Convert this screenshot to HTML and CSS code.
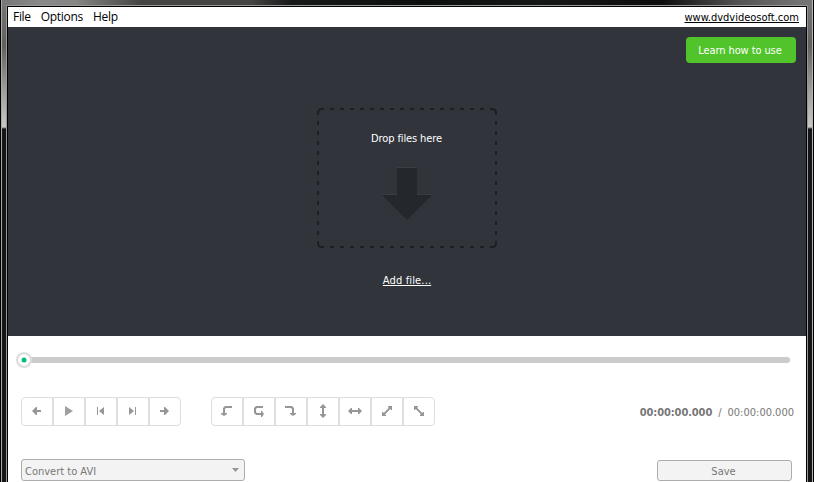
FILE: index.html
```html
<!DOCTYPE html>
<html lang="en">
<head>
<meta charset="utf-8">
<title>Video editor</title>
<link rel="stylesheet" href="styles.css">
</head>
<body>
<div class="frame">
<div class="glass">
<main class="window">
  <header class="menubar">
    <nav class="menu"><span>File</span><span>Options</span><span>Help</span></nav>
    <a class="site">www.dvdvideosoft.com</a>
  </header>
  <section class="stage">
    <button class="learn"><span>Learn how to use</span></button>
    <div class="drop">
      <svg class="dash" width="180" height="140" viewBox="0 0 180 140">
        <path class="hint" d="M13 0.500H167M13 138.500H167"/>
        <path class="dashes" d="M13 1H167M13 139H167M1 13V127M179 13V127"/>
        <path class="corner" d="M1 7V5Q1 1 5 1H7M173 1H175Q179 1 179 5V7M179 133V135Q179 139 175 139H173M7 139H5Q1 139 1 135V133"/>
      </svg>
      <span class="droptext">Drop files here</span>
      <svg class="arrow" width="50" height="54" viewBox="0 0 50 54"><path fill="#3b3d43" d="M15 0H35V27H50L49 29H1L0 27H15Z"/><path fill="#24272b" d="M15 1H35V28H50L25 53L0 28H15Z"/></svg>
    </div>
    <a class="add">Add file...</a>
  </section>
  <section class="controls">
    <div class="slider"><svg class="knob" width="16" height="16" viewBox="0 0 16 16"><circle cx="8" cy="8" r="6.900" fill="#fff" stroke="#dedede" stroke-width="2.200"/><circle cx="8" cy="8" r="2.500" fill="#00bd7c"/></svg></div>
    <div class="tools">
      <div class="group">
        <button><svg viewBox="0 0 16 16"><path d="M3 8L7 4H8V7H12V9H8V12H7Z"/></svg></button>
        <button><svg viewBox="0 0 16 16"><path fill="#a0a0a0" d="M4 3L12 8L4 13Z"/></svg></button>
        <button><svg viewBox="0 0 16 16"><path d="M4 4H5V12H4ZM11 4V12L6 8Z"/></svg></button>
        <button><svg viewBox="0 0 16 16"><path d="M4 4L9 8L4 12ZM10 4H11V12H10Z"/></svg></button>
        <button><svg viewBox="0 0 16 16"><path d="M3 7H7V4H8L12 8L8 12H7V9H3Z"/></svg></button>
      </div>
      <div class="group">
        <button><svg viewBox="0 0 16 16"><path d="M13 3V5H7L6 6V10H8V11L5 13L2 11V10H4V5L6 3Z"/></svg></button>
        <button><svg viewBox="0 0 16 16"><path d="M12 3V5H6L5 6V9L6 10H10V8H11L13 11L11 14H10V12H5L3 10V5L5 3Z"/></svg></button>
        <button><svg viewBox="0 0 16 16"><path d="M2 3H9L11 5V10H13V11L10 13L7 11V10H9V6L8 5H2Z"/></svg></button>
        <button><svg viewBox="0 0 16 16"><path d="M8 1L11 4V5H9V11H11V12L8 15L5 12V11H7V5H5V4Z"/></svg></button>
        <button><svg viewBox="0 0 16 16"><path d="M1 8L4 5H5V7H11V5H12L15 8L12 11H11V9H5V11H4Z"/></svg></button>
        <button><svg viewBox="0 0 16 16"><path d="M9 3H13V7H12L11.300 6.100L6.100 11.300L7 12V13H3V9H4L4.700 9.900L9.900 4.700L9 4Z"/></svg></button>
        <button><svg viewBox="0 0 16 16"><path d="M3 3H7V4L6.100 4.700L11.300 9.900L12 9H13V13H9V12L9.900 11.300L4.700 6.100L4 7H3Z"/></svg></button>
      </div>
      <div class="time"><b>00:00:00.000</b><span class="slash">/</span><span>00:00:00.000</span></div>
    </div>
    <div class="bottom">
      <div class="select"><span>Convert to AVI</span><svg width="7" height="4"><path d="M0 0H7L3.500 4Z"/></svg></div>
      <button class="save"><span>Save</span></button>
    </div>
  </section>
</main>
</div>
</div>
</body>
</html>
```
FILE: styles.css
```css
* { box-sizing: border-box; }
body { margin: 0; width: 814px; height: 482px; overflow: hidden; font: 11px/14px "DejaVu Sans Condensed", "DejaVu Sans", sans-serif; font-stretch: condensed; }
button { font: inherit; padding: 0; margin: 0; }
span, a, b { white-space: nowrap; }
.frame {
  height: 482px;
  padding: 5px 5px 0;
  border: solid #000;
  border-width: 0 1px;
  box-shadow: inset 1px 0 #a9a9a8, inset -1px 0 #b5b5b5;
  background:
    linear-gradient(90deg, #777 0, #888 40px, #858683 75px, #454643 140px, #454643 250px, #171918 290px, #0c0d0d 420px, #151716 540px, #0c0c0c 660px, #555 740px, #747474 800px) 0 0 / 100% 6px no-repeat,
    linear-gradient(#777 0, #62605d 45px, #a09e9d 90px, #cac8c7 127px, #151517 129px, #151517 100%);
}
.glass { border: 1px solid #989998; border-bottom: 0; border-radius: 2px 2px 0 0; background: #000; padding: 1px 1px 0; width: 802px; }
.window { height: 475px; background: #fff; display: flex; flex-direction: column; width: 798px; }
.menubar { height: 20px; display: flex; justify-content: space-between; padding: 0 7px 0 5px; }
.menu { display: flex; gap: 10px; font: 12px/20px "Open Sans", sans-serif; letter-spacing: -.3px; }
.site { text-decoration: underline; line-height: 21px; }
.stage { height: 309px; background: #31343b; color: #fff; display: flex; flex-direction: column; align-items: center; }
.learn { align-self: flex-end; width: 110px; height: 26px; margin: 10px 10px 0 0; border: 0; border-radius: 4px; background: #52c42b; color: #fff; letter-spacing: -.1px; padding: 1px 2px 0 0; }
.drop { width: 180px; height: 140px; margin-top: 45px; position: relative; display: flex; flex-direction: column; align-items: center; }
.dash { position: absolute; inset: 0; fill: none; stroke-width: 2; }
.hint { stroke: #3b3d43; stroke-width: 1; stroke-dasharray: 4 6; }
.dashes { stroke: #1d1f23; stroke-dasharray: 4 6; }
.corner { stroke: #1d1f23; }
.droptext { margin-top: 24px; letter-spacing: -.12px; margin-right: 1px; }
.arrow { margin-top: 21px; }
.add { margin-top: 26px; text-decoration: underline; letter-spacing: .15px; }
.controls { flex: 1; }
.slider { height: 6px; margin: 21px 16px 0 10px; border-radius: 3px; background: #cbcbcb; position: relative; }
.knob { position: absolute; left: -2px; top: -5px; }
.tools { display: flex; margin: 34px 12px 0 13px; height: 29px; }
.group { display: flex; width: 160px; border: 1px solid #dedede; border-radius: 4px; margin-right: 30px; }
.group + .group { width: 224px; }
.group button { flex: 1; border: 0; border-right: 2px solid #dedede; background: none; display: flex; align-items: center; justify-content: center; }
.group button:last-child { border-right: 0; }
.group svg { width: 16px; height: 16px; fill: #969696; margin-top: -1px; }
.time { margin-left: auto; display: flex; line-height: 31px; color: #777; }
.time b { letter-spacing: -.1px; }
.slash { margin: 0 6px; }
.bottom { display: flex; justify-content: space-between; margin: 33px 14px 0 13px; }
.select { width: 224px; height: 22px; border: 1px solid #adadad; border-radius: 3px; background: #f3f3f3; color: #777; display: flex; justify-content: space-between; align-items: center; padding: 0 5px 0 3px; }
.select span { padding-top: 3px; }
.select svg { fill: #969696; }
.save { width: 135px; height: 21px; margin-top: 1px; border: 1px solid #adadad; border-radius: 3px; background: #f3f3f3; color: #777; padding: 2px 2px 0 0; }
```
